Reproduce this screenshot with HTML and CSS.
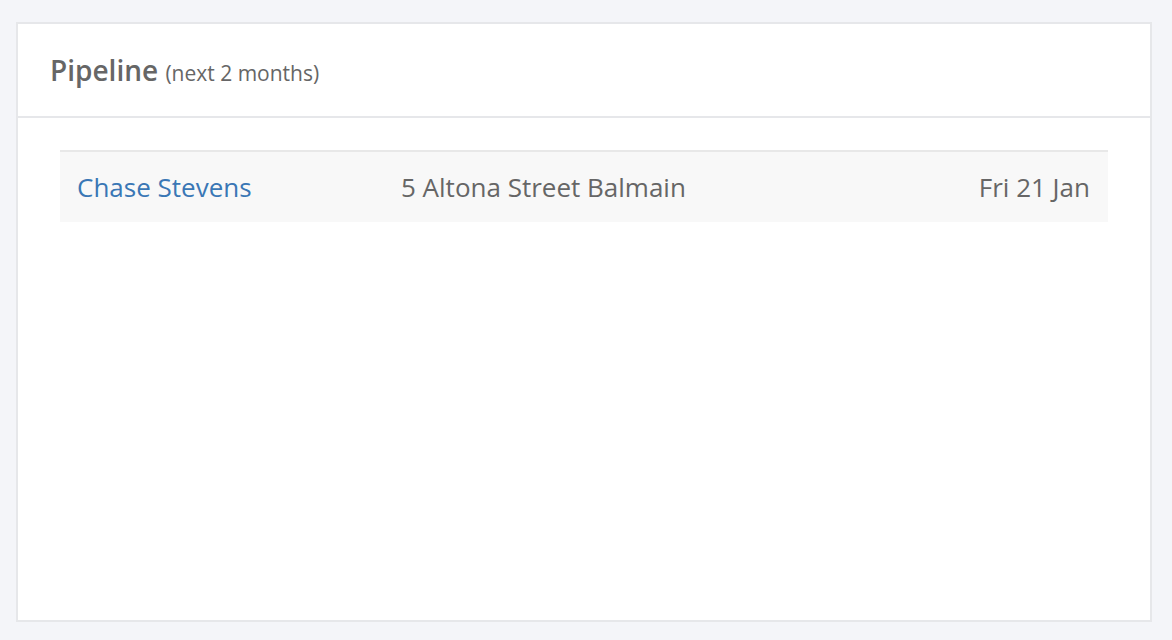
FILE: index.html
```html
<!DOCTYPE html>
<html>
<head>
<meta charset="utf-8">
<link rel="stylesheet" href="styles.css">
</head>
<body>
<div class="card">
  <div class="card-header">
    <h2 class="title">Pipeline <span class="sub">(next 2 months)</span></h2>
  </div>
  <div class="card-body">
    <div class="row">
      <a class="name" href="#">Chase Stevens</a>
      <span class="addr">5 Altona Street Balmain</span>
      <span class="date">Fri 21 Jan</span>
    </div>
  </div>
</div>
</body>
</html>
```
FILE: styles.css
```css
html, body {
  margin: 0;
  padding: 0;
  background: #f4f5f9;
}
body {
  padding: 22px 20px 18px 16px;
  font-family: "Open Sans", "Liberation Sans", sans-serif;
  color: #666;
}
.card {
  box-sizing: border-box;
  width: 1136px;
  height: 600px;
  background: #fff;
  border: 2px solid #e6e7ea;
  display: flex;
  flex-direction: column;
}
.card-header {
  height: 92px;
  border-bottom: 2px solid #e6e7ea;
  display: flex;
  align-items: center;
  padding-left: 32px;
}
.title {
  margin: 0;
  font-size: 28px;
  font-weight: 600;
  color: #666;
}
.sub {
  font-size: 21px;
  font-weight: 400;
}
.card-body {
  padding: 32px 42px;
}
.row {
  display: grid;
  grid-template-columns: 341px 1fr auto;
  align-items: center;
  height: 70px;
  border-top: 2px solid #e8e8e8;
  background: #f8f8f8;
  font-size: 26px;
}
.name {
  padding-left: 17px;
  color: #3a77b5;
  text-decoration: none;
}
.date {
  padding-right: 18px;
}
```
